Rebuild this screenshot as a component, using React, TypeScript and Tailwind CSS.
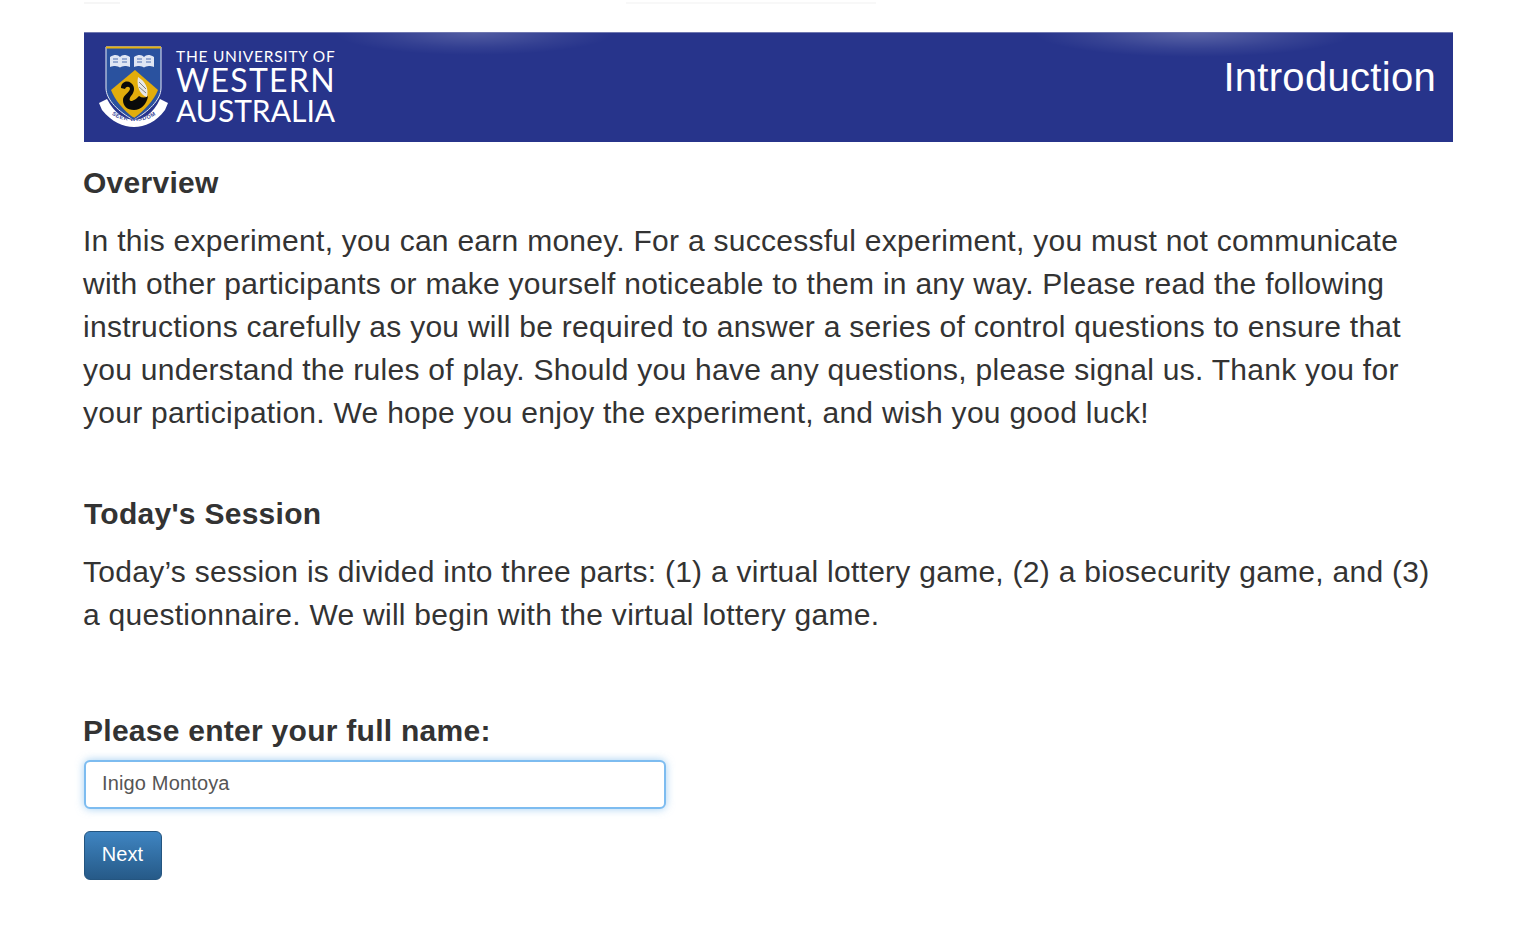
export default function App() {
  return (
    <div className="min-h-[935px] bg-white font-['Liberation_Sans',Arial,sans-serif] text-[#333333] overflow-hidden">
      <div className="flex justify-between pt-[2px] pl-[84px] pr-[660px] h-[32px]">
        <div className="h-[2px] w-[36px] bg-[#f6f6f6]" />
        <div className="h-[2px] w-[250px] bg-[#f8f8f8]" />
      </div>
      <div className="mx-[84px] w-[1369px] h-[110px] flex justify-between pl-[14px] pr-[17px] border-t border-[#6f77b0] bg-[#27348b] bg-[radial-gradient(ellipse_140px_22px_at_390px_0px,rgba(255,255,255,0.2),rgba(255,255,255,0.06)_65%,transparent),radial-gradient(ellipse_160px_24px_at_1110px_0px,rgba(255,255,255,0.24),rgba(255,255,255,0.07)_65%,transparent)]">
        <div className="flex items-start gap-[6px] pt-[13px]">
          <svg width="72" height="82" viewBox="0 0 72 82" className="shrink-0">
            <path d="M8 1 H63 V42 C63 54 50 66 35.5 74 C21 66 8 54 8 42 Z" fill="#2a529f" stroke="#e8ecf6" strokeWidth="1" />
            <path d="M8 1.5 H63" stroke="#e6b10e" strokeWidth="2" />
            <path d="M37 24 L60 44 C56 54 47 64 36 72 C25 64 17 54 13 44 Z" fill="#e2ad0c" />
            <path d="M12 11 C17 8 20 9 22 11 C24 9 27 8 32 11 V21 C27 19 24 20 22 21.5 C20 20 17 19 12 21 Z" fill="#dfe6f3" />
            <path d="M36 11 C41 8 44 9 46 11 C48 9 51 8 56 11 V21 C51 19 48 20 46 21.5 C44 20 41 19 36 21 Z" fill="#dfe6f3" />
            <path d="M15 13 H20 M15 16 H20 M24 13 H29 M24 16 H29 M39 13 H44 M39 16 H44 M48 13 H53 M48 16 H53" stroke="#4a6cb0" strokeWidth="1.2" />
            <path d="M23 42 C23 36 29 34 33 37 C38 41 36 47 33 50 C31 53 31 55 34 55 C37 54 39 52 41 50 C44 52 47 52 50 50 C49 58 43 64 36 64 C29 64 25 60 25 54 C25 49 31 47 32 43 C32 40 28 40 27 43 Z" fill="#0a0a0a" />
            <path d="M40 31 C47 35 51 42 49 51 C43 50 38 41 40 31 Z" fill="#e8e8e8" />
            <path d="M41 36 L48 43 M41 41 L48 47" stroke="#555" strokeWidth="0.7" />
            <path d="M1 57 L9 53 C17 68 26 73 36 74 C46 73 55 68 62 53 L70 57 L67 64 C58 76 47 81 36 81 C25 81 14 76 4 64 Z" fill="#fff" />
            <path id="ribbon" d="M11 66 C22 78 50 78 61 66" fill="none" />
            <text fontSize="5.6" fontWeight="700" fill="#3b4a9a" letterSpacing="0.6" fontFamily="Liberation Sans, sans-serif">
              <textPath href="#ribbon" startOffset="50%" textAnchor="middle">SEEK WISDOM</textPath>
            </text>
          </svg>
          <div className="font-['Lato',sans-serif] text-white">
            <div className="text-[15.5px] leading-[20px] tracking-[0.75px] whitespace-nowrap">THE UNIVERSITY OF</div>
            <div className="text-[32px] leading-[28px] tracking-[1.3px] whitespace-nowrap">WESTERN</div>
            <div className="text-[30px] leading-[33px] whitespace-nowrap">AUSTRALIA</div>
          </div>
        </div>
        <div className="text-white text-[40px] leading-[44px] tracking-[0.3px] pt-[22px]">Introduction</div>
      </div>

      <div className="mx-[84px] w-[1369px] tracking-[0.27px] text-[30px]">
        <h2 className="-ml-[1px] font-bold leading-[36px] mt-[23px]">Overview</h2>
        <p className="-ml-[1px] leading-[43px] mt-[18px] whitespace-nowrap">
          In this experiment, you can earn money. For a successful experiment, you must not communicate<br />
          with other participants or make yourself noticeable to them in any way. Please read the following<br />
          instructions carefully as you will be required to answer a series of control questions to ensure that<br />
          you understand the rules of play. Should you have any questions, please signal us. Thank you for<br />
          your participation. We hope you enjoy the experiment, and wish you good luck!
        </p>
        <h2 className="font-bold leading-[36px] mt-[62px]">Today's Session</h2>
        <p className="-ml-[1px] leading-[43px] mt-[18px] whitespace-nowrap">
          Today’s session is divided into three parts: (1) a virtual lottery game, (2) a biosecurity game, and (3)<br />
          a questionnaire. We will begin with the virtual lottery game.
        </p>
        <h2 className="-ml-[1px] font-bold leading-[36px] mt-[77px]">Please enter your full name:</h2>
        <input
          readOnly
          value="Inigo Montoya"
          className="block mt-[11px] w-[582px] h-[49px] pl-[16px] pr-[17px] pb-[3px] bg-white border-2 border-[#7dbcf0] rounded-[6px] text-[20px] tracking-[0.15px] text-[#555555] shadow-[0_0_8px_rgba(102,175,233,0.6)] outline-none"
        />
        <button className="block mt-[22px] w-[78px] h-[49px] pb-[3px] pr-[1px] rounded-[6px] border border-[#245580] text-white text-[20px] tracking-[0.1px] bg-gradient-to-b from-[#3f85c2] to-[#265a88]">
          Next
        </button>
      </div>
    </div>
  );
}
